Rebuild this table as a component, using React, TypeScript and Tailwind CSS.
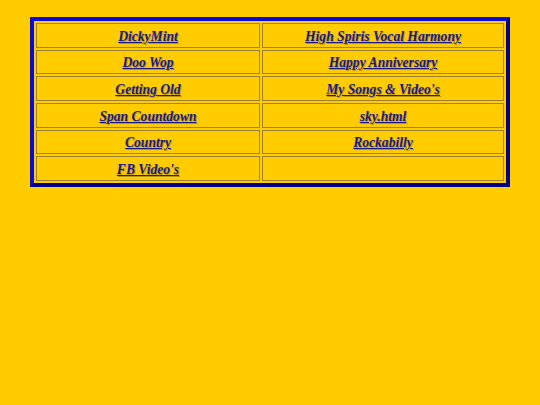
import React from "react";

const cells: (string | null)[] = [
  "DickyMint",
  "High Spiris Vocal Harmony",
  "Doo Wop",
  "Happy Anniversary",
  "Getting Old",
  "My Songs & Video's",
  "Span Countdown",
  "sky.html",
  "Country",
  "Rockabilly",
  "FB Video's",
  null,
];

export default function App() {
  return (
    <div className="min-h-[405px] w-[540px] bg-[#ffcc00] pt-[17px]">
      <div className="mx-auto w-[480px] border-4 border-t-[#0c0cd0] border-l-[#0c0cd0] border-r-[#000088] border-b-[#000088] p-[2px]">
        <div className="grid grid-cols-[224px_242px] gap-[2px]">
          {cells.map((c, i) => (
            <div
              key={i}
              className="flex h-[24.67px] items-center justify-center border border-[#9c8232] pt-[3px] text-center"
            >
              {c && (
                <a
                  href="#"
                  className="text-[13.6px] font-bold italic text-[#1a1a88] underline [text-shadow:1px_1px_1px_rgba(90,80,60,0.45)]"
                  style={{ fontFamily: '"Liberation Serif", "Times New Roman", serif' }}
                >
                  {c}
                </a>
              )}
            </div>
          ))}
        </div>
      </div>
    </div>
  );
}
